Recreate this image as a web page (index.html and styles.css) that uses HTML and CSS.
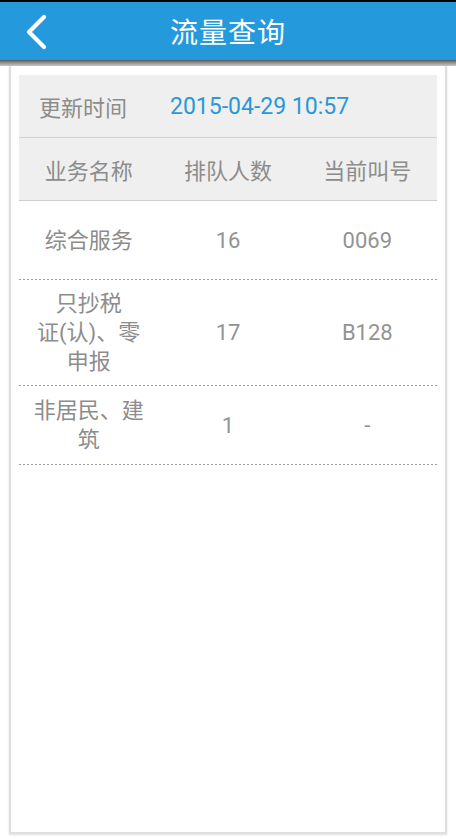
FILE: index.html
```html
<!DOCTYPE html>
<html lang="zh-CN">
<head>
    <meta charset="UTF-8">
    <meta name="viewport" content="width=device-width, initial-scale=1.0">
    <title>流量查询</title>
    <link rel="stylesheet" href="styles.css">
</head>
<body>
    <div class="page">
        <header class="title-bar">
            <a class="back-btn" href="#" aria-label="返回">
                <svg width="24" height="36" viewBox="0 0 24 36">
                    <polyline points="19,3 4,18 19,33" fill="none" stroke="#fff" stroke-width="4.2" stroke-linecap="round" stroke-linejoin="round"/>
                </svg>
            </a>
            <h1 class="title">流量查询</h1>
        </header>
        <div class="title-shadow"></div>

        <div class="card">
            <div class="panel">
                <div class="update-row">
                    <span class="update-label">更新时间</span>
                    <span class="update-time">2015-04-29 10:57</span>
                </div>

                <div class="table-head">
                    <div>业务名称</div>
                    <div>排队人数</div>
                    <div>当前叫号</div>
                </div>

                <div class="table-row">
                    <div>综合服务</div>
                    <div class="num">16</div>
                    <div class="num">0069</div>
                </div>
                <div class="table-row">
                    <div>只抄税<br>证(认)、零<br>申报</div>
                    <div class="num">17</div>
                    <div class="num">B128</div>
                </div>
                <div class="table-row">
                    <div>非居民、建<br>筑</div>
                    <div class="num">1</div>
                    <div class="num">-</div>
                </div>
            </div>
        </div>
    </div>
</body>
</html>
```

FILE: styles.css
```css
body {
    margin: 0;
    background-color: #fff;
    font-family: Roboto, "Noto Sans CJK SC", sans-serif;
    color: #8c8c8c;
}

.page {
    height: 839px;
    display: flex;
    flex-direction: column;
}

.title-bar {
    position: relative;
    height: 58px;
    border-top: 2px solid #000;
    background-color: #2499db;
    display: flex;
    justify-content: center;
    align-items: center;
}

.back-btn {
    position: absolute; /* 左端に重ねる */
    left: 25px;
    top: 12px;
    display: flex;
}

.title {
    margin: 0;
    font-size: 28px;
    font-weight: normal;
    color: #fff;
    letter-spacing: 1px;
}

.title-shadow {
    height: 6px;
    background: linear-gradient(to bottom, #555 0%, #8a8a8a 40%, #c9c9c9 100%);
}

.card {
    flex: 1;
    margin: 0 9px 5px;
    border: 2px solid #dedede;
    border-top: none;
    box-shadow: 0 1px 2px rgba(0, 0, 0, 0.12);
    padding: 9px 8px 8px;
}

.panel {
    display: flex;
    flex-direction: column;
}

.update-row {
    height: 62px;
    background-color: #efefef;
    border-bottom: 1px solid #d2d2d2;
    display: flex;
    align-items: center;
    padding-left: 20px;
    font-size: 22px;
}

.update-label {
    width: 131px; /* ラベル幅を固定 */
}

.update-time {
    color: #2898d8;
    font-size: 23px;
}

.table-head,
.table-row {
    display: grid;
    grid-template-columns: repeat(3, 1fr);
    align-items: center;
    text-align: center;
    font-size: 22px;
}

.table-head {
    height: 62px;
    background-color: #efefef;
    border-bottom: 1px solid #cfcfcf;
}

.table-row {
    min-height: 79px;
    box-sizing: border-box;
    padding: 9px 0 10px;
    line-height: 29px;
    background-image: repeating-linear-gradient(to right, #9e9e9e 0 2px, transparent 2px 4px);
    background-size: 100% 1px;
    background-position: bottom;
    background-repeat: no-repeat;
}

.num {
    font-size: 22px;
    color: #939393;
}
```
